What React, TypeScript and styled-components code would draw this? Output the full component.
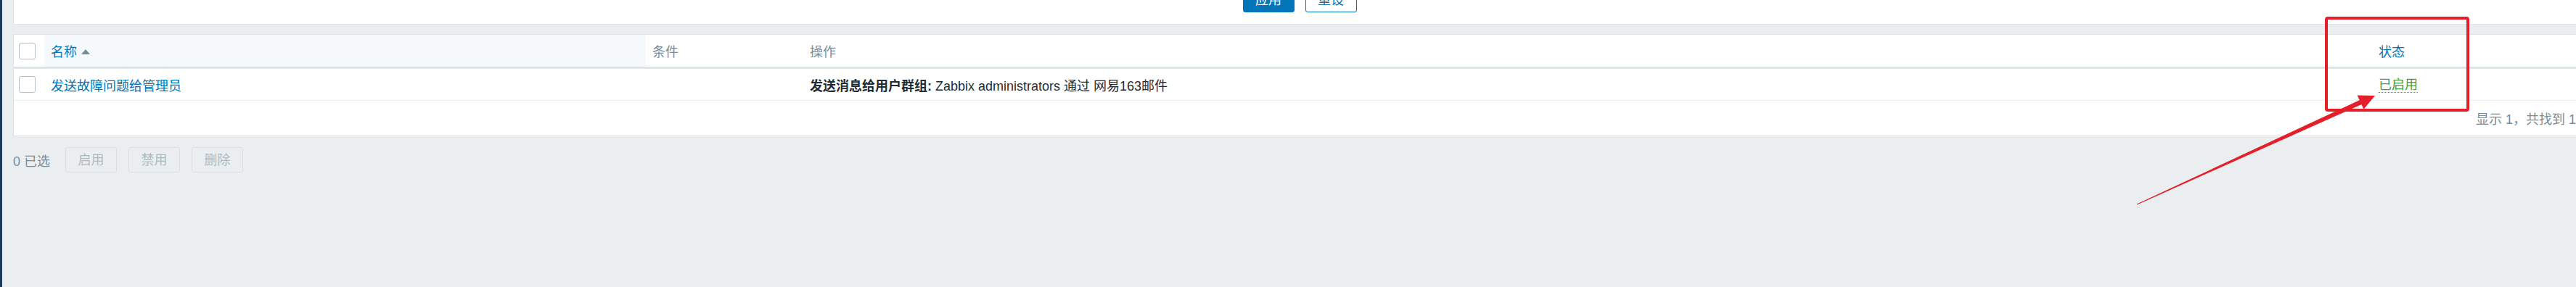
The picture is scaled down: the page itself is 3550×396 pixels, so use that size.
import React from "react";
import styled, { createGlobalStyle } from "styled-components";

const GlobalStyle = createGlobalStyle`
  html, body {
    margin: 0;
    padding: 0;
    background: #ebeef0;
    overflow: hidden;
  }
  body {
    font-family: "Liberation Sans", Arial, "Noto Sans CJK SC", sans-serif;
    font-size: 18px;
    color: #1f2c33;
  }
`;

const Page = styled.div`
  position: relative;
  display: flex;
  width: 3582px;
  height: 396px;
  background: #ebeef0;
`;

const SidebarEdge = styled.div`
  width: 3px;
  flex: 0 0 3px;
  background: #1c3b58;
`;

const Main = styled.div`
  flex: 1 1 auto;
  padding: 0 18px 0 15px;
  display: flex;
  flex-direction: column;
`;

const FilterPanel = styled.div`
  background: #fff;
  border: 1px solid #dfe4e7;
  border-top: none;
`;

const FilterButtons = styled.div`
  display: flex;
  justify-content: center;
  gap: 15px;
  margin-top: -18px;
  padding-bottom: 16px;
`;

const Button = styled.button<{ $variant?: "primary" | "secondary" | "disabled" }>`
  box-sizing: border-box;
  width: 71px;
  height: 35px;
  border-radius: 3px;
  font-family: inherit;
  font-size: 18px;
  line-height: 1;
  padding: 0;
  cursor: pointer;
  border: 1px solid
    ${(p) => (p.$variant === "disabled" ? "#d9dee1" : "#0275b8")};
  background: ${(p) =>
    p.$variant === "primary"
      ? "#0275b8"
      : p.$variant === "disabled"
      ? "#ebeef0"
      : "#fff"};
  color: ${(p) =>
    p.$variant === "primary"
      ? "#fff"
      : p.$variant === "disabled"
      ? "#acbbc2"
      : "#0275b8"};
`;

const TablePanel = styled.div`
  margin-top: 13px;
  background: #fff;
  border: 1px solid #dfe4e7;
`;

const Row = styled.div<{ $header?: boolean }>`
  display: grid;
  grid-template-columns: 42px 829px 217px 2162px 1fr;
  align-items: stretch;
  height: ${(p) => (p.$header ? "44px" : "43px")};
  border-bottom: ${(p) => (p.$header ? "3px solid #dfe4e7" : "1px solid #ebeef0")};
`;

const Cell = styled.div<{ $sorted?: boolean; $check?: boolean }>`
  display: flex;
  align-items: center;
  padding-left: ${(p) => (p.$check ? "7px" : "9px")};
  background: ${(p) => (p.$sorted ? "#f6f9fb" : "transparent")};
  white-space: nowrap;
  overflow: hidden;
`;

const Checkbox = styled.span`
  display: inline-block;
  box-sizing: border-box;
  width: 23px;
  height: 23px;
  border: 1px solid #b4c0c6;
  border-radius: 3px;
  background: #fff;
`;

const HeadLink = styled.span`
  color: #0275b8;
`;

const HeadText = styled.span`
  color: #768d99;
`;

const SortArrow = styled.span`
  display: inline-block;
  width: 0;
  height: 0;
  margin-left: 6px;
  margin-top: 2px;
  border-left: 6px solid transparent;
  border-right: 6px solid transparent;
  border-bottom: 7px solid #768d99;
`;

const NameLink = styled.span`
  color: #0275b8;
`;

const Operation = styled.span`
  color: #1f2c33;
  b {
    font-weight: bold;
  }
`;

const StatusLink = styled.span`
  color: #429e47;
  border-bottom: 1px dotted #429e47;
  line-height: 20px;
  margin-top: 2px;
`;

const Paging = styled.div`
  height: 48px;
  display: flex;
  align-items: center;
  justify-content: flex-end;
  padding-right: 13px;
  color: #768d99;
`;

const ActionBar = styled.div`
  margin-top: 15px;
  display: flex;
  align-items: center;
  gap: 16px;
`;

const SelectedCount = styled.span`
  color: #768d99;
  margin-right: 6px;
  width: 50px;
  white-space: nowrap;
`;

const Annotation = styled.svg`
  position: absolute;
  left: 0;
  top: 0;
  width: 3550px;
  height: 396px;
  pointer-events: none;
`;

// arrow from tail to tip, tapering shaft + triangular head
const tail = { x: 2945, y: 282 };
const tip = { x: 3273, y: 132 };
const dx = tip.x - tail.x;
const dy = tip.y - tail.y;
const len = Math.hypot(dx, dy);
const ux = dx / len;
const uy = dy / len;
const nx = -uy;
const ny = ux;
const headLen = 22;
const headHalf = 10.5;
const bx = tip.x - ux * headLen;
const by = tip.y - uy * headLen;
const pt = (x: number, y: number) => `${x.toFixed(1)},${y.toFixed(1)}`;
const shaft = [
  pt(tail.x + nx * 0.6, tail.y + ny * 0.6),
  pt(bx + ux * 4 + nx * 3.2, by + uy * 4 + ny * 3.2),
  pt(bx + ux * 4 - nx * 3.2, by + uy * 4 - ny * 3.2),
  pt(tail.x - nx * 0.6, tail.y - ny * 0.6),
].join(" ");
const head = [
  pt(tip.x, tip.y),
  pt(bx + nx * headHalf, by + ny * headHalf),
  pt(bx - nx * headHalf, by - ny * headHalf),
].join(" ");

export default function App() {
  return (
    <>
      <GlobalStyle />
      <Page>
        <SidebarEdge />
        <Main>
          <FilterPanel>
            <FilterButtons>
              <Button $variant="primary">应用</Button>
              <Button $variant="secondary">重设</Button>
            </FilterButtons>
          </FilterPanel>

          <TablePanel>
            <Row $header>
              <Cell $check>
                <Checkbox />
              </Cell>
              <Cell $sorted>
                <HeadLink>名称</HeadLink>
                <SortArrow />
              </Cell>
              <Cell>
                <HeadText>条件</HeadText>
              </Cell>
              <Cell>
                <HeadText>操作</HeadText>
              </Cell>
              <Cell>
                <HeadLink>状态</HeadLink>
              </Cell>
            </Row>
            <Row>
              <Cell $check>
                <Checkbox />
              </Cell>
              <Cell>
                <NameLink>发送故障问题给管理员</NameLink>
              </Cell>
              <Cell />
              <Cell>
                <Operation>
                  <b>发送消息给用户群组:</b> Zabbix administrators 通过 网易163邮件
                </Operation>
              </Cell>
              <Cell>
                <StatusLink>已启用</StatusLink>
              </Cell>
            </Row>
            <Paging>显示 1，共找到 1</Paging>
          </TablePanel>

          <ActionBar>
            <SelectedCount>0 已选</SelectedCount>
            <Button $variant="disabled">启用</Button>
            <Button $variant="disabled">禁用</Button>
            <Button $variant="disabled">删除</Button>
          </ActionBar>
        </Main>

        <Annotation viewBox="0 0 3550 396">
          <rect
            x={3206}
            y={25}
            width={195}
            height={127}
            rx={2}
            fill="none"
            stroke="#e51f2a"
            strokeWidth={4}
          />
          <polygon points={shaft} fill="#e51f2a" />
          <polygon points={head} fill="#e51f2a" />
        </Annotation>
      </Page>
    </>
  );
}
